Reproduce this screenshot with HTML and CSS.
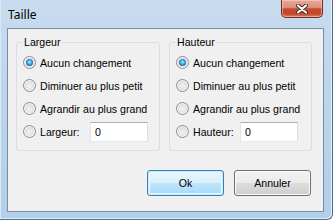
FILE: index.html
```html
<!DOCTYPE html>
<html lang="fr">
<head>
  <meta charset="UTF-8" />
  <title>Taille</title>
  <link rel="stylesheet" href="styles.css">
</head>
<body>
  <div class="window">
    <div class="titlebar">
      <span class="title">Taille</span>
      <button class="close" type="button" aria-label="Fermer">
        <svg width="12" height="10" viewBox="0 0 12 10">
          <path d="M2 1.5 L10 8.5 M10 1.5 L2 8.5" stroke="#3a2a28" stroke-width="4" stroke-linecap="round" fill="none"/>
          <path d="M2 1.5 L10 8.5 M10 1.5 L2 8.5" stroke="#ffffff" stroke-width="2.2" stroke-linecap="round" fill="none"/>
        </svg>
      </button>
    </div>

    <div class="client">
      <div class="groups">
        <fieldset class="group group-left">
          <legend>Largeur</legend>
          <label class="option"><span class="radio radio-on"></span>Aucun changement</label>
          <label class="option"><span class="radio"></span>Diminuer au plus petit</label>
          <label class="option"><span class="radio"></span>Agrandir au plus grand</label>
          <label class="option">
            <span class="radio"></span>
            <span class="field-label">Largeur:</span>
            <input class="textbox" type="text" value="0" readonly>
          </label>
        </fieldset>

        <fieldset class="group group-right">
          <legend>Hauteur</legend>
          <label class="option"><span class="radio radio-on"></span>Aucun changement</label>
          <label class="option"><span class="radio"></span>Diminuer au plus petit</label>
          <label class="option"><span class="radio"></span>Agrandir au plus grand</label>
          <label class="option">
            <span class="radio"></span>
            <span class="field-label">Hauteur:</span>
            <input class="textbox" type="text" value="0" readonly>
          </label>
        </fieldset>
      </div>

      <div class="actions">
        <button class="btn btn-default" type="button">Ok</button>
        <button class="btn" type="button">Annuler</button>
      </div>
    </div>
  </div>
</body>
</html>
```

FILE: styles.css
```css
* {
  margin: 0;
  padding: 0;
  box-sizing: border-box;
}

body {
  width: 333px;
  height: 220px;
  overflow: hidden;
  background: #ffffff;
  font-family: "Liberation Sans", Arial, sans-serif;
  font-size: 10.6px;
  color: #000000;
}

/* window frame (aero glass) */
.window {
  width: 333px;
  height: 220px;
  display: flex;
  flex-direction: column;
  padding: 0 8px 7px 7px;
  background: linear-gradient(180deg, #c8dcef 0%, #bdd5ec 40%, #b3cee8 100%);
  border-right: 1px solid #52698a;
  border-bottom: 1px solid #52698a;
  border-bottom-right-radius: 6px;
  box-shadow: inset -1px -1px 0 #d8f2ff, inset 1px 0 0 #d9e8f5;
}

.titlebar {
  height: 28px;
  display: flex;
  flex: none;
}

.title {
  align-self: center;
  padding-left: 1px;
  padding-top: 1px;
  font-family: "Noto Sans", "Liberation Sans", sans-serif;
  font-size: 12px;
  color: #000000;
}

.close {
  margin-left: auto;
  margin-right: 1px;
  width: 42px;
  height: 18px;
  display: flex;
  align-items: center;
  justify-content: center;
  border: 1px solid #6e2d25;
  border-top: none;
  border-radius: 0 0 5px 5px;
  background: linear-gradient(180deg, #e6aa9c 0%, #dc8c78 45%, #c94a2f 52%, #c6462b 80%, #d9785c 100%);
  box-shadow: inset 0 0 0 1px rgba(255, 220, 210, 0.5);
}

.close svg {
  display: block;
}

/* client area */
.client {
  flex: 1;
  background: #f0f0f0;
  border: 1px solid #7a8da4;
}

.groups {
  display: flex;
  gap: 9px;
  padding: 7px 11px 0 8px;
}

.group {
  border: 1px solid #d5dfe5;
  border-radius: 3px;
  padding: 2px 6px 7px;
}

.group-left {
  width: 144px;
}

.group-right {
  width: 143px;
}

legend {
  padding: 0 1px;
  line-height: 13px;
}

.option {
  height: 23px;
  display: flex;
  align-items: center;
  gap: 4px;
  white-space: nowrap;
}

.radio {
  flex: none;
  width: 13px;
  height: 13px;
  border-radius: 50%;
  border: 1px solid #8b8d8f;
  background: radial-gradient(circle at 50% 55%, #f2f2f2 0%, #e3e3e3 45%, #c9c9c9 100%);
  box-shadow: inset 0 0 0 1px #f6f6f6;
  display: flex;
  align-items: center;
  justify-content: center;
}

.radio-on::after {
  content: "";
  width: 7px;
  height: 7px;
  border-radius: 50%;
  background: radial-gradient(circle at 50% 45%, #b5f0ff 0%, #3aa9e6 40%, #0e4d8f 85%);
}

.field-label {
  width: 46px;
}

.group-right .field-label {
  width: 43px;
}

.textbox {
  width: 58px;
  height: 20px;
  padding-left: 4px;
  border: 1px solid;
  border-color: #abadb3 #dbdfe6 #e3e9ef #e2e3ea;
  background: #ffffff;
  font-family: inherit;
  font-size: 10.6px;
  color: #000000;
  outline: none;
}

/* buttons */
.actions {
  display: flex;
  justify-content: flex-end;
  gap: 10px;
  margin-top: 19px;
  padding-right: 12px;
}

.btn {
  width: 77px;
  height: 26px;
  border: 1px solid #707070;
  border-radius: 3px;
  background: linear-gradient(180deg, #f2f2f2 0%, #ebebeb 50%, #dddddd 51%, #cfcfcf 100%);
  box-shadow: inset 0 0 0 1px #fbfbfb;
  font-family: inherit;
  font-size: 10.6px;
  color: #000000;
}

.btn-default {
  border-color: #3c7fb1;
  background: linear-gradient(180deg, #eaf6fd 0%, #d9f0fc 50%, #bee6fd 51%, #a7d9f5 100%);
  box-shadow: inset 0 0 0 1px #c4ecfb, inset 0 0 0 2px #e8f7fe;
}
```
